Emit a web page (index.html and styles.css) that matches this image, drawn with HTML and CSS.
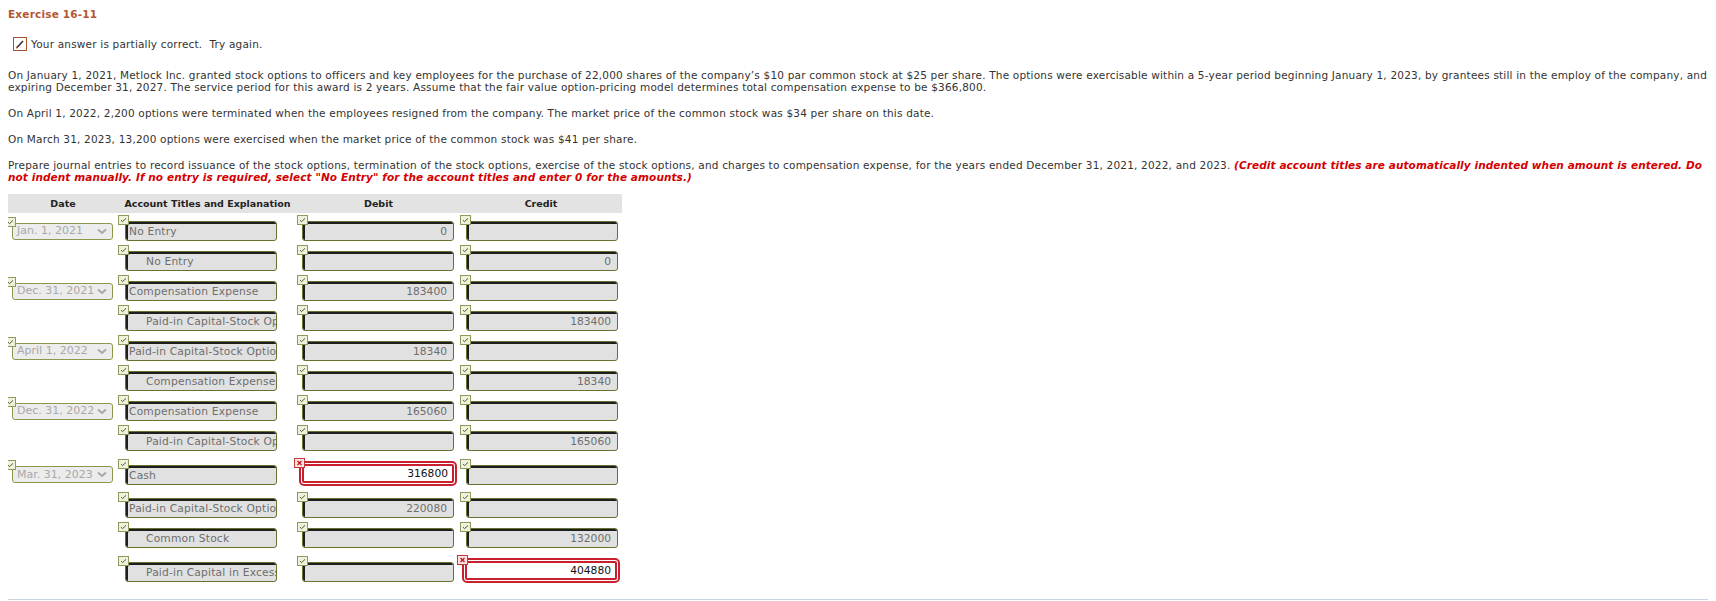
FILE: index.html
```html
<!DOCTYPE html>
<html lang="en">
<head>
  <meta charset="UTF-8" />
  <title>Exercise 16-11</title>
  <link rel="stylesheet" href="styles.css">
</head>
<body>
  <h1 class="title">Exercise 16-11</h1>

  <div class="feedback">
    <svg class="pencil" width="14" height="14" viewBox="0 0 14 14">
      <rect x="0.5" y="0.5" width="13" height="13" fill="#fff" stroke="#a4532c"/>
      <path d="M4 10.5 L10 4" stroke="#333" stroke-width="1.6"/>
      <path d="M3.2 11.3 L4.4 10" stroke="#b5562f" stroke-width="1.6"/>
    </svg>
    <span>Your answer is partially correct.&nbsp; Try again.</span>
  </div>

  <p>On January 1, 2021, Metlock Inc. granted stock options to officers and key employees for the purchase of 22,000 shares of the company’s $10 par common stock at $25 per share. The options were exercisable within a 5-year period beginning January 1, 2023, by grantees still in the employ of the company, and expiring December 31, 2027. The service period for this award is 2 years. Assume that the fair value option-pricing model determines total compensation expense to be $366,800.</p>
  <p>On April 1, 2022, 2,200 options were terminated when the employees resigned from the company. The market price of the common stock was $34 per share on this date.</p>
  <p>On March 31, 2023, 13,200 options were exercised when the market price of the common stock was $41 per share.</p>
  <p>Prepare journal entries to record issuance of the stock options, termination of the stock options, exercise of the stock options, and charges to compensation expense, for the years ended December 31, 2021, 2022, and 2023. <span class="note">(Credit account titles are automatically indented when amount is entered. Do not indent manually. If no entry is required, select "No Entry" for the account titles and enter 0 for the amounts.)</span></p>

  <table class="journal" id="journal">
    <colgroup>
      <col class="c-date"><col class="c-acct"><col class="c-debit"><col class="c-credit">
    </colgroup>
    <thead>
      <tr><th>Date</th><th>Account Titles and Explanation</th><th>Debit</th><th>Credit</th></tr>
    </thead>
    <tbody></tbody>
  </table>

  <div class="next-box"></div>

  <script>
    const rows = [
      ['Jan. 1, 2021', 'No Entry', false, '0', '', '', ''],
      ['', 'No Entry', true, '', '', '0', ''],
      ['Dec. 31, 2021', 'Compensation Expense', false, '183400', '', '', ''],
      ['', 'Paid-in Capital-Stock Options', true, '', '', '183400', ''],
      ['April 1, 2022', 'Paid-in Capital-Stock Options', false, '18340', '', '', ''],
      ['', 'Compensation Expense', true, '', '', '18340', ''],
      ['Dec. 31, 2022', 'Compensation Expense', false, '165060', '', '', ''],
      ['', 'Paid-in Capital-Stock Options', true, '', '', '165060', ''],
      ['Mar. 31, 2023', 'Cash', false, '316800', 'x', '', ''],
      ['', 'Paid-in Capital-Stock Options', false, '220080', '', '', ''],
      ['', 'Common Stock', true, '', '', '132000', ''],
      ['', 'Paid-in Capital in Excess of Par', true, '', '', '404880', 'x']
    ];

    const tick = '<svg class="badge" width="11" height="10" viewBox="0 0 11 10"><rect x="0.5" y="0.5" width="10" height="9" fill="#eef2dd" stroke="#8c9a5c"/><path d="M3 5.2 L4.6 6.6 L8 3.4" fill="none" stroke="#4c5a2a" stroke-width="1"/></svg>';
    const cross = '<svg class="badge" width="11" height="10" viewBox="0 0 11 10"><rect x="0.5" y="0.5" width="10" height="9" fill="#fbe3e3" stroke="#c23a3a"/><path d="M3.5 3 L7.5 7 M7.5 3 L3.5 7" stroke="#c0141e" stroke-width="1.4"/></svg>';

    function amount(value, mark) {
      if (mark === 'x') {
        return '<div class="slot wrong">' + cross + '<div class="field num red">' + value + '</div></div>';
      }
      return '<div class="slot">' + tick + '<div class="field num">' + value + '</div></div>';
    }

    const body = document.querySelector('#journal tbody');
    rows.forEach(r => {
      const tr = document.createElement('tr');
      let date = '';
      if (r[0]) {
        date = '<div class="slot">' + tick + '<div class="select"><span>' + r[0] + '</span>' +
          '<svg class="chev" width="10" height="7" viewBox="0 0 10 7"><path d="M1 1.5 L5 5 L9 1.5" fill="none" stroke="#a8a8a8" stroke-width="2"/></svg></div></div>';
      }
      tr.innerHTML =
        '<td class="date">' + date + '</td>' +
        '<td class="acct"><div class="slot">' + tick + '<div class="field' + (r[2] ? ' indent' : '') + '">' + r[1] + '</div></div></td>' +
        '<td class="debit">' + amount(r[3], r[4]) + '</td>' +
        '<td class="credit">' + amount(r[5], r[6]) + '</td>';
      body.appendChild(tr);
    });
  </script>
</body>
</html>
```

FILE: styles.css
```css
html, body {
  margin: 0; padding: 0;
  background: #fff;
}

body {
  margin: 8px;
  font-family: "DejaVu Sans", Verdana, sans-serif;
  font-size: 10.5px; line-height: 12px; letter-spacing: 0.19px;
  color: #333;
}

.title {
  margin: 0; font-size: 10.5px; line-height: 12px;
  font-weight: bold; color: #b5562f;
}

.feedback {
  display: flex; align-items: center; gap: 4px;
  margin: 17px 0 0 5px; height: 14px;
}
.pencil { display: block; }

p { margin: 14px 0 0; }
p:first-of-type { margin-top: 18px; }
.note {
  color: #d40000; font-weight: bold; font-style: italic;
  letter-spacing: 0.09px;
}

/* journal table */
.journal {
  margin-top: 11px;
  border-collapse: collapse;
  table-layout: fixed; width: 614px;
  letter-spacing: 0;
}
.c-date   { width: 110px; }
.c-acct   { width: 179px; }
.c-debit  { width: 163px; }
.c-credit { width: 162px; }

.journal th {
  background: #e3e3e3; color: #222;
  font-size: 9.5px; font-weight: bold;
  height: 19px; padding: 0; text-align: center;
}

.journal td { padding: 2px 0; vertical-align: middle; }

.slot { position: relative; padding-top: 6px; }
.badge { position: absolute; top: 0; left: 0; display: block; }
.date .badge { left: -3px; }

.select {
  display: flex; align-items: center; justify-content: space-between;
  box-sizing: border-box; width: 101px; height: 17px; margin-left: 4px;
  padding: 0 5px 0 4px;
  border: 1px solid #8a9a4a; border-radius: 3px;
  background: #ececec; color: #a9a9a9;
  font-size: 11px; white-space: nowrap;
}
.chev { display: block; }

.field {
  box-sizing: border-box; width: 152px; height: 20px; margin-left: 7px;
  padding: 0 6px 0 3px;
  border: 1px solid #66722f; border-radius: 3px;
  box-shadow: inset 2px 2px 0 #1e1e1e;
  background: #e1e1e1; color: #6e6e6e;
  font-size: 10.7px; line-height: 19px; letter-spacing: 0.18px;
  white-space: nowrap; overflow: hidden;
}
.field.indent { padding-left: 20px; }
.debit .field { margin-left: 5px; }
.credit .field { margin-left: 6px; }
.num { text-align: right; letter-spacing: 0; }

/* wrong answers: taller double red box */
.slot.wrong { padding: 6px 0 2px; height: 25px; }
.wrong .badge { top: 3px; left: -3px; }
.field.red {
  width: 158px; height: 25px; margin-left: 2px;
  border: 5px double #c8202e; border-radius: 5px;
  box-shadow: none; background: #fff; color: #111;
  line-height: 15px; padding-right: 4px;
}

.next-box {
  margin-top: 12px;
  border-top: 1px solid #c9d6e2;
  height: 4px;
}
```
